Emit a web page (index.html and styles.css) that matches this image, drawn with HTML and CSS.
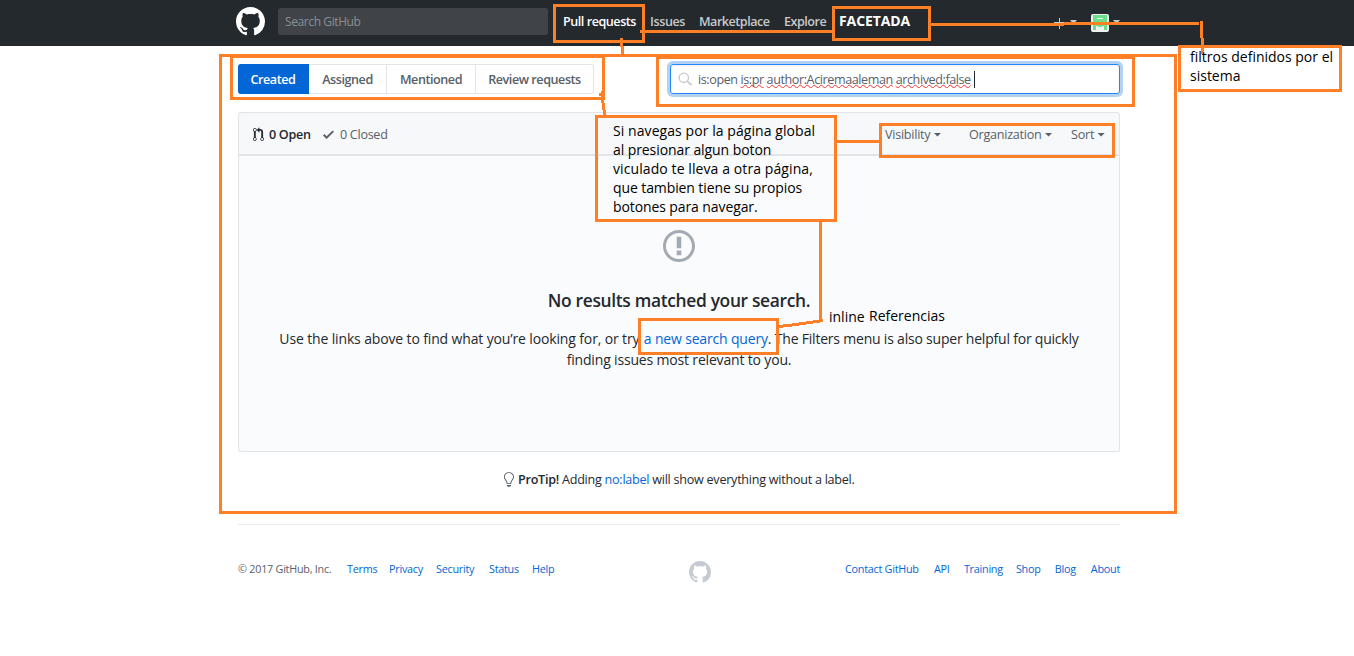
FILE: index.html
```html
<!DOCTYPE html>
<html lang="en">
<head>
<meta charset="utf-8">
<title>Pull requests</title>
<link rel="stylesheet" href="styles.css">
</head>
<body>
<svg class="defs" width="0" height="0"><defs>
<symbol id="mark" viewBox="0 0 16 16"><path d="M8 0C3.58 0 0 3.58 0 8c0 3.54 2.29 6.53 5.47 7.59.4.07.55-.17.55-.38 0-.19-.01-.82-.01-1.49-2.01.37-2.53-.49-2.69-.94-.09-.23-.48-.94-.82-1.13-.28-.15-.68-.52-.01-.53.63-.01 1.08.58 1.23.82.72 1.21 1.87.87 2.33.66.07-.52.28-.87.51-1.07-1.78-.2-3.64-.89-3.64-3.95 0-.87.31-1.59.82-2.15-.08-.2-.36-1.02.08-2.12 0 0 .67-.21 2.2.82.64-.18 1.32-.27 2-.27.68 0 1.36.09 2 .27 1.53-1.04 2.2-.82 2.2-.82.44 1.1.16 1.92.08 2.12.51.56.82 1.27.82 2.15 0 3.07-1.87 3.75-3.65 3.95.29.25.54.73.54 1.48 0 1.07-.01 1.93-.01 2.2 0 .21.15.46.55.38A8.013 8.013 0 0 0 16 8c0-4.42-3.58-8-8-8z"/></symbol>
</defs></svg>
<header class="header">
  <div class="header-inner">
    <svg class="logo"><use href="#mark"/></svg>
    <div class="site-search">Search GitHub</div>
    <nav class="nav">
      <a class="nav-pulls">Pull requests</a>
      <a class="nav-issues">Issues</a>
      <a class="nav-market">Marketplace</a>
      <a class="nav-explore">Explore</a>
    </nav>
    <div class="user">
      <svg class="plus" viewBox="0 0 11 11"><path d="M5 0h1v4h5v1.500H6V11H5V5.500H0V4h5z"/></svg>
      <i class="caret caret-new"></i>
      <svg class="avatar" viewBox="0 0 18 18"><rect width="18" height="18" rx="2" fill="#f0f0f0"/><path d="M2 1h14v15h-3v-4h-2v1H7v-1H5v4H2z" fill="#6be08a"/><path d="M6 4h6v1H6zM5 12h2v4H5zM11 12h2v4h-2z" fill="#f0f0f0"/></svg>
      <i class="caret caret-me"></i>
    </div>
  </div>
</header>
<main class="container">
  <div class="toolbar">
    <div class="tabs">
      <a class="tab tab-created">Created</a><a class="tab tab-assigned">Assigned</a><a class="tab tab-mentioned">Mentioned</a><a class="tab tab-review">Review requests</a>
    </div>
    <div class="query">
      <svg class="query-icon" viewBox="0 0 16 16"><circle cx="6.2" cy="6.2" r="5" fill="none" stroke="#c6cbd1" stroke-width="1.5"/><path d="M10 10l4.5 4" stroke="#c6cbd1" stroke-width="1.9"/></svg>
      <span class="query-text">is:open <u>is:pr</u> <u>author:Aciremaaleman</u> <u>archived:false</u></span><i class="cursor"></i>
    </div>
  </div>
  <section class="box">
    <div class="box-head">
      <svg class="pr-icon" viewBox="0 0 12 16"><path d="M11 11.28V5c-.03-.78-.34-1.47-.94-2.06C9.46 2.35 8.78 2.03 8 2H7V0L4 3l3 3V4h1c.27.02.48.11.69.31.21.2.3.42.31.69v6.28A1.993 1.993 0 0 0 10 15a1.993 1.993 0 0 0 1-3.72zm-1 2.92c-.66 0-1.2-.55-1.2-1.2 0-.65.55-1.2 1.2-1.2.65 0 1.2.55 1.2 1.2 0 .65-.55 1.2-1.2 1.2zM4 3c0-1.11-.89-2-2-2a1.993 1.993 0 0 0-1 3.72v6.56A1.993 1.993 0 0 0 2 15a1.993 1.993 0 0 0 1-3.72V4.72c.59-.34 1-.98 1-1.72zm-.8 10c0 .66-.55 1.2-1.2 1.2-.65 0-1.2-.55-1.2-1.2 0-.65.55-1.2 1.2-1.2.65 0 1.2.55 1.2 1.2zM2 4.2C1.34 4.2.8 3.65.8 3c0-.65.55-1.2 1.2-1.2.65 0 1.2.55 1.2 1.2 0 .65-.55 1.2-1.2 1.2z"/></svg>
      <span class="open">0 Open</span>
      <svg class="check-icon" viewBox="0 0 12 16"><path d="M12 5l-8 8-4-4 1.5-1.5L4 10l6.5-6.5z"/></svg>
      <span class="closed">0 Closed</span>
      <div class="filters">
        <span class="filter f-vis">Visibility<i class="caret"></i></span>
        <span class="filter f-org">Organization<i class="caret"></i></span>
        <span class="filter f-sort">Sort<i class="caret"></i></span>
      </div>
    </div>
    <div class="blank">
      <svg class="blank-icon" viewBox="0 1 14 14"><path d="M7 2.3c3.14 0 5.7 2.56 5.7 5.7s-2.56 5.7-5.7 5.7A5.71 5.71 0 0 1 1.3 8c0-3.14 2.56-5.7 5.7-5.7zM7 1C3.14 1 0 4.14 0 8s3.14 7 7 7 7-3.14 7-7-3.14-7-7-7zm1 3H6v5h2V4zm0 6H6v2h2v-2z"/></svg>
      <h3>No results matched your search.</h3>
      <p class="line-one"><span class="lead">Use the links above to find what you’re looking for, or try</span> <a>a new search query</a>. <span class="tail">The Filters menu is also super helpful for quickly</span></p>
      <p class="line-two">finding issues most relevant to you.</p>
    </div>
  </section>
  <div class="protip">
    <svg class="bulb" viewBox="0 0 12 16"><path d="M6.5 0C3.48 0 1 2.19 1 5c0 .92.55 2.25 1 3 1.34 2.25 1.78 2.78 2 4v1h5v-1c.22-1.22.66-1.75 2-4 .45-.75 1-2.08 1-3 0-2.81-2.48-5-5.5-5zm3.64 7.48c-.25.44-.47.8-.67 1.11-.86 1.41-1.25 2.06-1.45 3.23-.02.05-.02.11-.02.17H5c0-.06 0-.13-.02-.17-.2-1.17-.59-1.83-1.45-3.23-.2-.31-.42-.67-.67-1.11C2.44 6.78 2 5.65 2 5c0-2.2 2.02-4 4.5-4 1.22 0 2.36.42 3.22 1.19C10.55 2.94 11 3.94 11 5c0 .66-.44 1.78-.86 2.48zM4 14h5c-.23 1.14-1.3 2-2.5 2s-2.27-.86-2.5-2z"/></svg>
    <span><b>ProTip!</b> Adding <a>no:label</a> will show everything without a label.</span>
  </div>
  <footer class="footer">
    <div class="links"><span class="w-copy">© 2017 GitHub, Inc.</span><a class="w-terms">Terms</a><a class="w-privacy">Privacy</a><a class="w-security">Security</a><a class="w-status">Status</a><a>Help</a></div>
    <svg class="foot-logo"><use href="#mark"/></svg>
    <div class="links links-right"><a class="w-contact">Contact GitHub</a><a class="w-api">API</a><a class="w-training">Training</a><a class="w-shop">Shop</a><a class="w-blog">Blog</a><a>About</a></div>
  </footer>
</main>
<svg class="marks" viewBox="0 0 1354 656" shape-rendering="crispEdges">
  <rect x="220.5" y="55.5" width="955" height="457"/>
  <rect x="554.5" y="5.5" width="89" height="36"/>
  <rect x="833.5" y="7.5" width="96" height="32"/>
  <rect x="1179.5" y="46.5" width="161" height="44"/>
  <rect x="231.5" y="56.5" width="372" height="42"/>
  <rect x="657.5" y="57.5" width="476" height="48"/>
  <rect x="596.5" y="116.5" width="239" height="104"/>
  <rect x="880.5" y="124.5" width="233" height="32"/>
  <rect x="639.5" y="319.5" width="138" height="34"/>
  <path d="M640 31.500H832M931 24.500H1064M1064 23.500H1199M1201.500 21V38M1202.500 38V54M621.500 38V47M622.500 46V55M837 141.500H880M820.500 222V322M779 326.500L796 324.500L823 320.500M599 94.500H605M602.500 91V100L605 116"/>
</svg>
<div class="note note-facet">FACETADA</div>
<div class="note note-system"><div class="s1">filtros definidos por el</div><div class="s2">sistema</div></div>
<div class="note note-nav"><div class="n1">Si navegas por la página global</div><div class="n2">al presionar algun boton</div><div class="n3">viculado te lleva a otra página,</div><div class="n4">que tambien tiene su propios</div><div class="n5">botones para navegar.</div></div>
<div class="note note-inline">inline</div>
<div class="note note-ref">Referencias</div>
</body>
</html>
```
FILE: styles.css
```css
* { box-sizing: border-box; }
body { margin: 0; height: 656px; overflow: hidden; background: #fff; color: #24292e; font: 12.6px/19px "Open Sans", "Noto Sans", sans-serif; letter-spacing: -0.3px; }
svg { display: block; flex: none; fill: currentColor; }
.defs { position: absolute; }
a { color: #0366d6; white-space: nowrap; }
.header { height: 46px; background: #24292e; }
.header-inner { width: 884px; margin-left: 236px; display: flex; align-items: center; height: 43px; }
.logo { width: 29px; height: 29px; color: #fff; }
.site-search { width: 270px; height: 27px; margin-left: 13px; padding-left: 7px; border-radius: 3px; background: #404448; color: #8b8f93; font-size: 12px; letter-spacing: -0.4px; line-height: 27px; }
.nav { display: flex; margin-left: 15px; font-weight: 600; }
.nav a { color: #c8c9cb; }
.nav .nav-pulls { width: 87px; color: #fff; letter-spacing: -0.47px; }
.nav-issues { width: 49px; letter-spacing: -0.4px; }
.nav-market { width: 85px; letter-spacing: -0.5px; }
.nav-explore { letter-spacing: -0.5px; }
.user { display: flex; align-items: center; margin-left: auto; color: #c8c9cb; height: 20px; padding-top: 3px; }
.plus { width: 11px; height: 11px; }
.avatar { width: 18px; height: 18px; margin-left: 14px; }
.caret { display: inline-block; flex: none; width: 7px; height: 4px; background: currentColor; clip-path: polygon(0 0, 100% 0, 50% 100%); }
.user .caret { margin-top: -2px; }
.caret-new { margin-left: 5px; }
.caret-me { margin-left: 4px; }
.container { width: 882px; margin-left: 238px; }
.toolbar { display: flex; justify-content: space-between; padding-top: 18px; height: 66px; }
.tabs { display: flex; height: 30px; font-weight: 600; letter-spacing: -0.45px; }
.tab { height: 30px; line-height: 29px; text-align: center; border: 1px solid #e1e4e8; border-left: 0; color: #586069; }
.tab-created { width: 71px; background: #0366d6; color: #fff; border-color: #0366d6; border-radius: 3px 0 0 3px; }
.tab-assigned { width: 78px; }
.tab-mentioned { width: 89px; }
.tab-review { width: 118px; border-radius: 0 3px 3px 0; }
.query { display: flex; align-items: center; width: 450px; height: 30px; padding-left: 7px; border: 1px solid #2188ff; border-radius: 3px; box-shadow: 0 0 0 3px #b3d1f3, inset 0 1px 2px #1b1f2313; color: #586069; }
.query-icon { width: 15px; height: 15px; }
.query-text { margin-left: 5px; white-space: nowrap; letter-spacing: -0.42px; }
.query u { text-decoration: underline wavy #e33 1px; text-decoration-skip-ink: none; text-underline-offset: 0; }
.cursor { width: 1px; height: 17px; margin-left: 3px; background: #24292e; }
.box-head { display: flex; align-items: center; height: 44px; padding: 1px 14px 0; border: 1px solid #e1e4e8; border-bottom-width: 2px; border-radius: 3px 3px 0 0; background: #f6f8fa; }
.pr-icon { width: 11px; height: 15px; }
.open { width: 54px; margin-left: 5px; font-weight: 600; }
.check-icon { width: 11px; height: 15px; color: #586069; }
.closed { margin-left: 6px; color: #586069; }
.filters { display: flex; margin-left: auto; color: #586069; letter-spacing: -0.25px; }
.filter .caret { width: 8px; margin-left: 3px; vertical-align: 2px; }
.f-vis { width: 84px; }
.f-org { width: 102px; }
.f-sort { width: 34px; white-space: nowrap; }
.blank { height: 296px; border: 1px solid #e1e4e8; border-top: 0; border-radius: 0 0 3px 3px; background: #fafbfc; padding-top: 74px; text-align: center; }
.blank-icon { width: 32px; height: 32px; margin: 0 auto 26px; color: #a3aab1; }
.blank h3 { margin: 0 0 16px; font-size: 17.4px; line-height: 24px; font-weight: 600; letter-spacing: -0.33px; white-space: nowrap; }
.blank p { margin: 0; font-size: 14px; line-height: 21px; letter-spacing: -0.17px; white-space: nowrap; }
.line-one .lead { letter-spacing: -0.14px; }
.line-one a { margin-left: 1px; }
.line-one .tail { letter-spacing: -0.21px; }
.protip { display: flex; align-items: center; margin: 17px 0 35px 265px; height: 20px; white-space: nowrap; letter-spacing: -0.26px; }
.bulb { width: 11px; height: 15px; margin-right: 4px; color: #586069; }
.protip b { font-weight: 600; }
.footer { display: flex; border-top: 1px solid #eaecef; padding-top: 34px; font-size: 10.8px; letter-spacing: -0.25px; color: #586069; }
.links { display: flex; width: 380px; white-space: nowrap; }
.w-copy { width: 109px; }
.w-terms { width: 42px; }
.w-privacy { width: 47px; }
.w-security { width: 53px; }
.w-status { width: 43px; }
.links-right { width: 275px; margin-left: auto; }
.w-contact { width: 89px; }
.w-api { width: 30px; }
.w-training { width: 52px; }
.w-shop { width: 39px; }
.w-blog { width: 36px; }
.foot-logo { width: 22px; height: 22px; margin: 2px 0 0 71px; color: #c6cbd1; }
.marks { position: absolute; left: 0; top: 0; width: 1354px; height: 656px; fill: none; stroke: #ff7f27; stroke-width: 3; }
.note { position: absolute; color: #000; font-size: 14px; line-height: 19px; letter-spacing: 0; white-space: nowrap; }
.note-facet { left: 839px; top: 11px; color: #fff; font-weight: 700; letter-spacing: -0.1px; }
.note-system { left: 1190px; top: 47px; }
.note-nav { left: 613px; top: 121px; }
.n1 { letter-spacing: 0.07px; }
.n2 { letter-spacing: -0.08px; }
.n3 { letter-spacing: 0.09px; }
.n4 { letter-spacing: -0.1px; }
.n5 { letter-spacing: -0.1px; }
.note-inline { left: 829px; top: 307px; }
.note-ref { left: 869px; top: 306px; }
```
